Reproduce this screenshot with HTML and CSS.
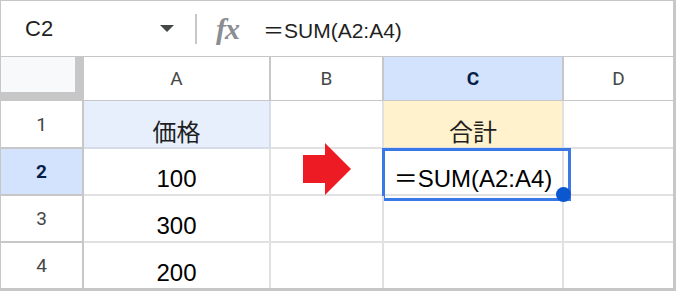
FILE: index.html
```html
<!DOCTYPE html>
<html>

<head>
    <link rel="stylesheet" href="styles.css">
</head>

<body>
    <div class="sheet">

        <!-- formula bar -->
        <div class="formula-bar">
            <div class="name-box">
                <span>C2</span>
                <span class="caret"></span>
            </div>
            <div class="divider"></div>
            <div class="fx">fx</div>
            <div class="formula">＝SUM(A2:A4)</div>
        </div>

        <!-- grid -->
        <div class="grid">
            <div class="corner"></div>
            <div class="col-head">A</div>
            <div class="col-head">B</div>
            <div class="col-head active">C</div>
            <div class="col-head last">D</div>

            <div class="row-head">1</div>
            <div class="cell label blue">価格</div>
            <div class="cell"></div>
            <div class="cell label yellow">合計</div>
            <div class="cell last"></div>

            <div class="row-head active">2</div>
            <div class="cell">100</div>
            <div class="cell arrow-cell">
                <svg class="arrow" width="48" height="52" viewBox="0 0 48 52">
                    <path d="M0 12 H22 V0 L48 26 L22 52 V40 H0 Z" fill="#ed1c24" />
                </svg>
            </div>
            <div class="cell selected">
                ＝SUM(A2:A4)
                <span class="handle"></span>
            </div>
            <div class="cell last"></div>

            <div class="row-head">3</div>
            <div class="cell">300</div>
            <div class="cell"></div>
            <div class="cell"></div>
            <div class="cell last"></div>

            <div class="row-head bottom">4</div>
            <div class="cell bottom">200</div>
            <div class="cell bottom"></div>
            <div class="cell bottom"></div>
            <div class="cell bottom last"></div>
        </div>
    </div>
</body>

</html>
```
FILE: styles.css
```css
* {
    box-sizing: border-box;
}

body {
    margin: 0;
    background: #ffffff;
    font-family: "Liberation Sans", Arial, "Noto Sans CJK JP", sans-serif;
}

.sheet {
    width: 676px;
    height: 291px;
    border-left: 1px solid #c7c7c7;
    border-top: 1px solid #c7c7c7;
    border-right: 3px solid #c7c7c7;
    border-bottom: 3px solid #c7c7c7;
    overflow: hidden;
}

/* formula bar */
.formula-bar {
    height: 56px;
    border-bottom: 1px solid #c7c7c7;
    display: flex;
    align-items: center;
    color: #1f1f1f;
    font-size: 21px;
}

.name-box {
    width: 185px;
    display: flex;
    align-items: center;
    justify-content: space-between;
    padding: 0 12px 0 24px;
    font-size: 22px;
}

.caret {
    width: 0;
    height: 0;
    border-left: 7px solid transparent;
    border-right: 7px solid transparent;
    border-top: 7px solid #444746;
}

.divider {
    width: 2px;
    height: 30px;
    margin-left: 9px;
    background: #c7c7c7;
}

.fx {
    margin-left: 19px;
    width: 28px;
    font-family: "Liberation Serif", serif;
    font-style: italic;
    font-weight: bold;
    font-size: 30px;
    color: #8a8d91;
    letter-spacing: -1px;
}

.formula {
    margin-left: 19px;
    font-family: "Liberation Sans", "Noto Sans CJK JP", sans-serif;
}

/* grid */
.grid {
    display: grid;
    grid-template-columns: 83px 187px 113px 180px 109px;
    grid-template-rows: 44px 48px 47px 47px 45px;
}

.corner {
    background: #f8f9fa;
    border-right: 9px solid #c7c7c7;
    border-bottom: 9px solid #c7c7c7;
}

.col-head {
    display: flex;
    align-items: center;
    justify-content: center;
    border-right: 2px solid #c7c7c7;
    border-bottom: 1px solid #c7c7c7;
    font-family: Roboto, "Liberation Sans", sans-serif;
    font-size: 19px;
    color: #444746;
}

.col-head.active {
    background: #d3e3fd;
    color: #041e49;
    font-weight: bold;
}

.col-head.last {
    border-right: none;
}

.row-head {
    display: flex;
    align-items: center;
    justify-content: center;
    border-right: 2px solid #c7c7c7;
    border-bottom: 2px solid #c7c7c7;
    font-family: Roboto, "Liberation Sans", sans-serif;
    font-size: 19px;
    color: #444746;
}

.row-head.active {
    background: #d3e3fd;
    color: #041e49;
    font-weight: bold;
}

.row-head.bottom {
    border-bottom: none;
}

.cell {
    display: flex;
    align-items: flex-end;
    justify-content: center;
    padding-bottom: 3px;
    border-right: 2px solid #e1e1e1;
    border-bottom: 2px solid #e1e1e1;
    font-size: 24px;
    line-height: 24px;
    color: #000000;
    position: relative;
}

.cell.last {
    border-right: none;
}

.cell.bottom {
    border-bottom: none;
}

.cell.label {
    font-family: "Noto Sans CJK JP", sans-serif;
    padding-bottom: 4px;
    color: #1f1f1f;
}

.cell.blue {
    background: #e6effb;
    border-color: #d6dde8;
}

.cell.yellow {
    background: #fff2cc;
}

.arrow {
    position: absolute;
    left: 32px;
    top: -6px;
}

.cell.selected {
    font-family: "Liberation Sans", "Noto Sans CJK JP", sans-serif;
}

.cell.selected::after {
    content: "";
    position: absolute;
    left: -2px;
    top: -1px;
    width: 183px;
    height: 47px;
    border: 3px solid #3b78e7;
}

.handle {
    position: absolute;
    left: 172px;
    top: 38px;
    width: 15px;
    height: 15px;
    border-radius: 50%;
    background: #0b57d0;
    z-index: 2;
}
```
